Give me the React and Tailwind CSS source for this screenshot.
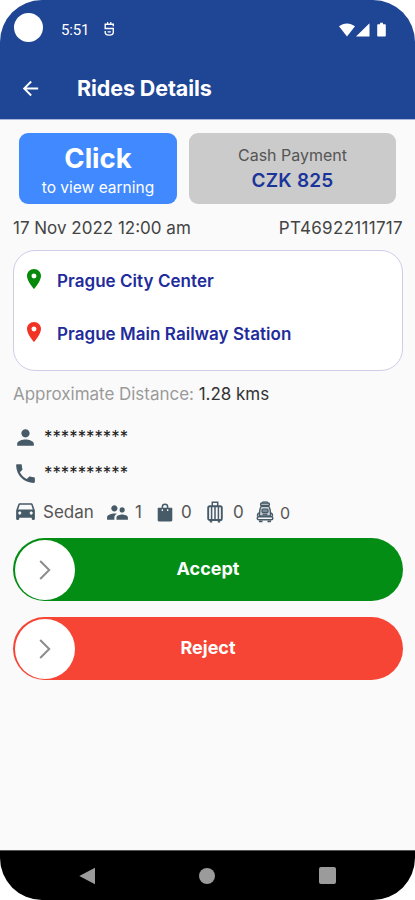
import React from 'react';
import {
    MdArrowBack,
    MdDirectionsCar,
    MdLocationOn,
    MdPerson,
    MdPhone,
    MdSupervisorAccount,
} from 'react-icons/md';

const BagIcon = () => (
    <svg viewBox="0 0 16 19" className="shrink-0 w-4 h-[19px]" fill="currentColor">
        <path fillRule="evenodd" d="M4.600 4.700V4a3.400 3.400 0 0 1 6.800 0v.7h3.300c.3 0 .6.2.6.5v12.100c0 .7-.5 1.200-1.200 1.200H1.900c-.7 0-1.200-.5-1.200-1.200V5.200c0-.3.3-.5.6-.5zm1.500 0h3.800V4a1.900 1.900 0 0 0-3.800 0zM4.700 6.300v1.600h1.300V6.300zm5.300 0v1.600h1.300V6.300z" />
    </svg>
);

const SuitcaseIcon = () => (
    <svg viewBox="0 0 16 22" className="shrink-0 w-4 h-[22px]" fill="none" stroke="currentColor">
        <path d="M5.300 5V1.200h5.400V5" strokeWidth="1.500" />
        <rect x="1.200" y="5.200" width="13.600" height="13.800" rx="1.600" strokeWidth="1.900" />
        <path d="M4.600 5.500v13.500M8 6v13M11.400 5.500v13.500" strokeWidth="1.500" />
        <path d="M2.800 20.500h2.400M10.800 20.500h2.400" strokeWidth="2" />
    </svg>
);

const BackpackIcon = () => (
    <svg viewBox="0 0 18 22" className="shrink-0 w-[18px] h-[22px]" fill="none" stroke="currentColor">
        <path d="M6.500 2V.9h5V2" strokeWidth="1" />
        <rect x="4.600" y="2" width="8.800" height="2.600" rx="1.200" fill="currentColor" fillOpacity=".4" strokeWidth="1.400" />
        <path d="M5.200 5.400C3.800 7 3.400 9 3.400 15h11.200c0-6-.4-8-1.800-9.600z" fill="currentColor" fillOpacity=".25" strokeWidth="1.400" />
        <rect x="6" y="8" width="6" height="3.600" rx="1" fill="currentColor" fillOpacity=".6" strokeWidth="1.200" />
        <path d="M6.500 13.300h5" strokeWidth="1.200" />
        <path d="M3.300 12c-1.500.3-2 1.500-1.800 3.500M14.700 12c1.500.3 2 1.500 1.800 3.500" strokeWidth="1.300" />
        <rect x="1.200" y="15.800" width="15.600" height="3" rx="1.500" strokeWidth="1.400" />
        <path d="M3 20.400h3.500M11.500 20.400H15" strokeWidth="1.800" />
    </svg>
);

const StatusBar = () => (
    <div className="flex items-center justify-between h-[57px] pl-[14px] pr-[28px]">
        <div className="flex items-center">
            <span className="w-[29px] h-[29px] rounded-full bg-white -mt-[2px]" />
            <span className="ml-[18px] mt-[3px] font-[Roboto] text-[15px] leading-5 tracking-[-0.2px]">5:51</span>
            <svg viewBox="0 0 12 16" className="ml-[14px] mt-[1px] w-3 h-4" fill="none" stroke="currentColor" strokeWidth="1.400">
                <path d="M10.300 5.200V3.300H2.200v4.200h8.100v3.700c0 1.800-1.500 2.900-4.100 2.900s-4-1.100-4-2.900V10" />
                <path d="M4.600 1v2.200M7.800 1v2.200M4.600 10.800h3.200" strokeWidth="1.200" />
            </svg>
        </div>
        <svg viewBox="0 0 50 16" className="w-[50px] h-4 mt-[2px]" fill="currentColor">
            <path d="M2 4.300C6.500.4 13.300.4 18 4.300L10 14.400z" />
            <path d="M32.500 1.300v13.200H19z" />
            <path d="M41.200 2.200h1.900V.8h2.800v1.400h1.900c.6 0 1 .4 1 1v10.300c0 .6-.4 1-1 1h-6.600c-.6 0-1-.4-1-1V3.200c0-.6.4-1 1-1z" />
        </svg>
    </div>
);

const SlideButton = ({ label, className }) => (
    <div className={`relative flex items-center justify-center h-[63px] rounded-full text-white ${className}`}>
        <span className="absolute left-[2px] top-[1.5px] flex items-center justify-center w-[60px] h-[60px] rounded-full bg-white">
            <svg viewBox="0 0 12 20" className="w-3 h-5 text-[#8c8c8c]" fill="none" stroke="currentColor" strokeWidth="2">
                <path d="M1.200 1l9 9-9 9" />
            </svg>
        </span>
        <span className="mb-[2px] text-[18px] font-bold leading-6">{label}</span>
    </div>
);

const stops = [
    { name: 'Prague City Center', color: 'text-[#078a0b]' },
    { name: 'Prague Main Railway Station', color: 'text-[#f13325]' },
];

const App = () => {
    return (
        <div className="w-[415px] h-[900px] bg-white">
            <div className="flex flex-col h-full rounded-[42px] overflow-hidden bg-[#fafafa] font-[Inter,sans-serif] text-[#444]">
                <header className="h-[120px] bg-[#1f4595] border-b border-[#a9b5da] text-white">
                    <StatusBar />
                    <div className="flex items-center h-[62px] pl-[19px]">
                        <MdArrowBack className="w-[23px] h-[23px]" />
                        <h1 className="ml-[35px] text-[21.5px] font-bold leading-7 tracking-[-0.1px]">Rides Details</h1>
                    </div>
                </header>

                <main className="flex-1 pl-[13px] pr-[12px] pt-[13px]">
                    <div className="flex gap-[12px] px-[6px] h-[71px]">
                        <div className="w-[158px] rounded-[9px] bg-[#4189ff] text-white text-center pt-[9px]">
                            <p className="text-[27.5px] font-bold leading-8">Click</p>
                            <p className="text-[15.5px] leading-5 mt-[4px]">to view earning</p>
                        </div>
                        <div className="w-[207px] rounded-[9px] bg-[#cbcbcb] text-center pt-[12px]">
                            <p className="text-[16px] leading-5 text-[#555]">Cash Payment</p>
                            <p className="text-[19px] font-semibold leading-6 mt-[4px] tracking-[0.2px] text-[#1a349a]">CZK 825</p>
                        </div>
                    </div>

                    <div className="flex justify-between mt-[12px] text-[17px] leading-6">
                        <span>17 Nov 2022 12:00 am</span>
                        <span className="tracking-[0.3px]">PT46922111717</span>
                    </div>

                    <div className="mt-[10px] h-[121px] rounded-[22px] border border-[#cdcde8] bg-white pt-[3px] pl-[8px]">
                        {stops.map((stop) => (
                            <div key={stop.name} className="flex items-center h-[53px]">
                                <MdLocationOn className={`w-6 h-6 -mt-[3px] ${stop.color}`} />
                                <span className="ml-[11px] text-[17px] font-semibold leading-6 tracking-[0.05px] text-[#222b9b]">{stop.name}</span>
                            </div>
                        ))}
                    </div>

                    <p className="mt-[11px] text-[17px] leading-6 tracking-[-0.03px] text-[#9a9a9a]">
                        Approximate Distance: <span className="text-[#333]">1.28 kms</span>
                    </p>

                    <div className="flex items-center h-[36px] mt-[13px]">
                        <MdPerson className="w-[25px] h-[25px] text-[#465a68]" />
                        <span className="ml-[6px] text-[16.8px] leading-6 text-[#222]">**********</span>
                    </div>
                    <div className="flex items-center h-[36px]">
                        <MdPhone className="w-[25px] h-[25px] text-[#465a68]" />
                        <span className="ml-[6px] text-[16.8px] leading-6 text-[#222]">**********</span>
                    </div>

                    <div className="flex items-center h-[42px] text-[17px] text-[#465a68]">
                        <MdDirectionsCar className="shrink-0 -mt-[3px] w-[25px] h-[25px]" />
                        <span className="ml-[5px] mt-[2px] w-[51px] text-[#555]">Sedan</span>
                        <MdSupervisorAccount className="shrink-0 ml-[11px] w-[25px] h-[25px]" />
                        <span className="ml-[5px] mt-[2px] w-[22px] text-[#555]">1</span>
                        <BagIcon />
                        <span className="ml-[8px] mt-[2px] w-[26px] text-[#555]">0</span>
                        <SuitcaseIcon />
                        <span className="ml-[10px] mt-[2px] w-[23px] text-[#555]">0</span>
                        <BackpackIcon />
                        <span className="ml-[6px] mt-[1px] text-[16px] text-[#555]">0</span>
                    </div>

                    <SlideButton label="Accept" className="mt-[5px] bg-[#048d14]" />
                    <SlideButton label="Reject" className="mt-[16px] bg-[#f64435]" />
                </main>

                <nav className="flex items-center justify-between h-[50px] px-[79px] bg-black text-[#9b9b9b] border-t border-[#555]">
                    <svg viewBox="0 0 16 18" className="w-4 h-[18px]" fill="currentColor">
                        <path d="M16 .8v16.400L.3 9z" />
                    </svg>
                    <span className="w-4 h-4 rounded-full bg-[#9b9b9b]" />
                    <span className="w-[17px] h-[17px] rounded-[2px] bg-[#9b9b9b]" />
                </nav>
            </div>
        </div>
    );
};

export default App;
